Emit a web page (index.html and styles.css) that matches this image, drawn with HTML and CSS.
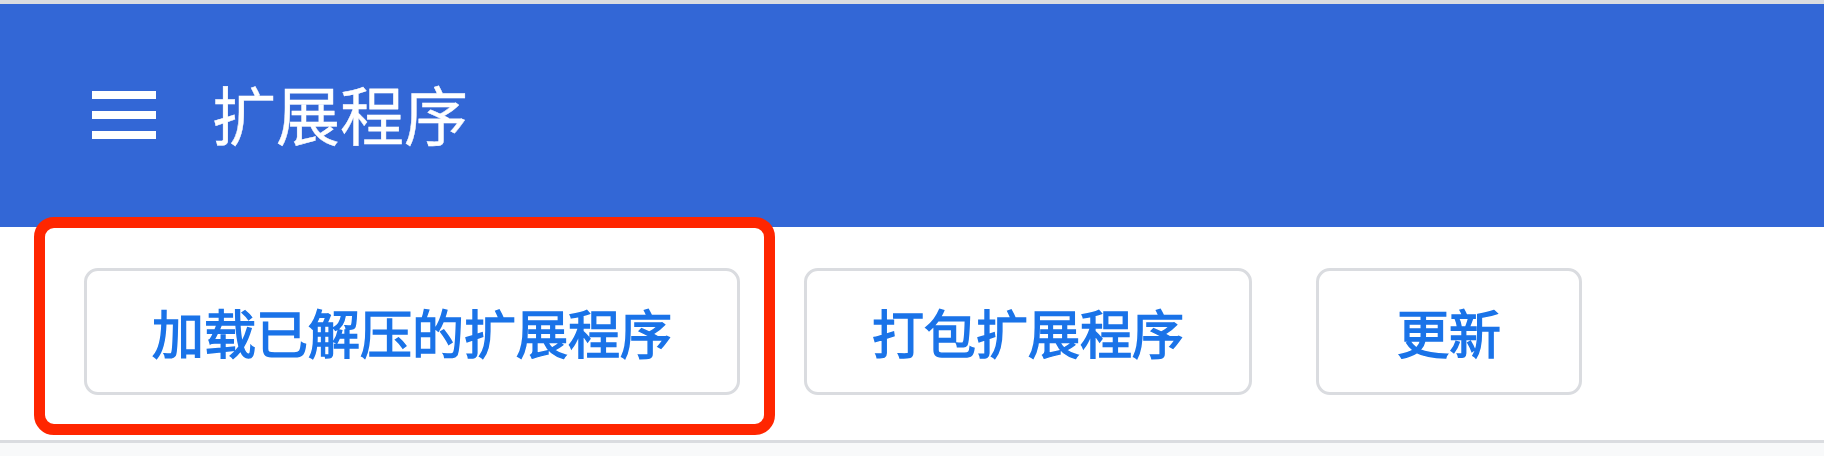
FILE: index.html
```html
<!DOCTYPE html>
<html lang="zh-CN">
<head>
<meta charset="utf-8">
<title>扩展程序</title>
<link rel="stylesheet" href="styles.css">
</head>
<body>
<div class="top-strip"></div>
<header class="header">
  <svg class="menu-icon" width="64" height="48" viewBox="0 0 64 48" aria-hidden="true">
    <rect x="0" y="0" width="64" height="8" fill="#ffffff"/>
    <rect x="0" y="20" width="64" height="8" fill="#ffffff"/>
    <rect x="0" y="40" width="64" height="8" fill="#ffffff"/>
  </svg>
  <h1 class="title">扩展程序</h1>
</header>
<div class="toolbar">
  <div class="highlight"></div>
  <button class="btn">加载已解压的扩展程序</button>
  <button class="btn">打包扩展程序</button>
  <button class="btn btn-narrow">更新</button>
</div>
<div class="divider"></div>
<div class="footer-area"></div>
</body>
</html>
```
FILE: styles.css
```css
html, body {
  margin: 0;
  padding: 0;
  background: #ffffff;
  font-family: "Noto Sans CJK SC", "Noto Sans", sans-serif;
}
.top-strip {
  height: 4px;
  background: #dadce0;
}
.header {
  height: 223px;
  background: #3367d6;
  display: flex;
  align-items: center;
  padding-left: 92px;
  box-sizing: border-box;
}
.menu-icon {
  display: block;
  flex: none;
  margin-top: -2px;
}
.title {
  margin: 0 0 0 56px;
  font-size: 64px;
  font-weight: 400;
  color: #ffffff;
  line-height: 1;
  margin-top: -8px;
  -webkit-text-stroke: 0.4px #ffffff;
}
.toolbar {
  position: relative;
  height: 213px;
  box-sizing: border-box;
  padding: 41px 0 0 84px;
  display: flex;
  align-items: flex-start;
  gap: 64px;
}
.btn {
  height: 127px;
  box-sizing: border-box;
  padding: 0 65px;
  min-width: 266px;
  border: 3px solid #dadce0;
  border-radius: 14px;
  background: #ffffff;
  color: #1a73e8;
  font-family: "Noto Sans CJK SC", "Noto Sans", sans-serif;
  font-size: 52px;
  font-weight: 400;
  -webkit-text-stroke: 1.5px #1a73e8;
  line-height: 1;
  display: flex;
  align-items: center;
  justify-content: center;
}
.highlight {
  position: absolute;
  left: 34px;
  top: -10px;
  width: 741px;
  height: 218px;
  box-sizing: border-box;
  border: 11px solid #ff2600;
  border-radius: 20px;
  pointer-events: none;
}
.divider {
  height: 3px;
  background: #dadce0;
}
.footer-area {
  height: 13px;
  background: #f8f9fa;
}
```
